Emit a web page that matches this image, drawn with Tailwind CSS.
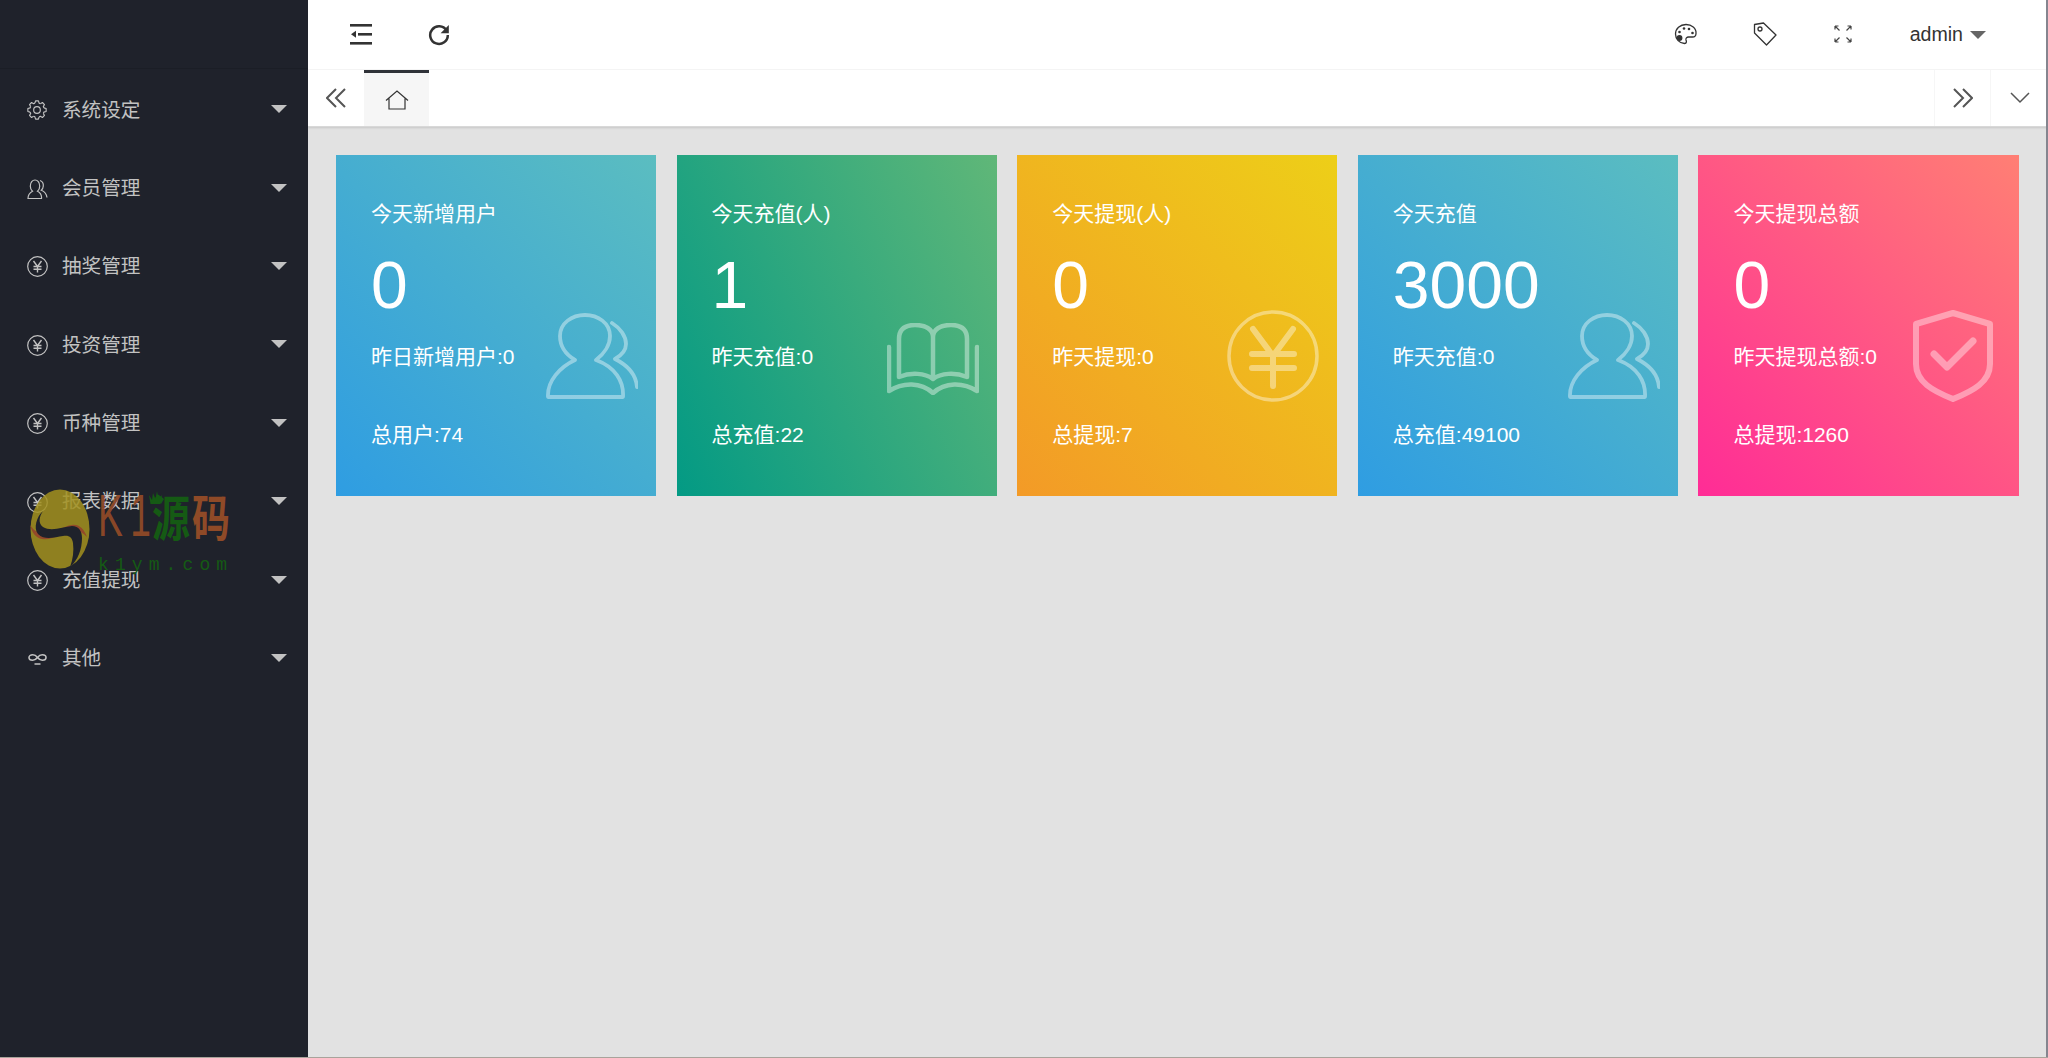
<!DOCTYPE html>
<html lang="zh"><head><meta charset="utf-8"><script src="https://cdn.jsdelivr.net/npm/@tailwindcss/browser@4"></script></head>
<body class="h-[1058px] w-[2048px] overflow-hidden font-['Liberation_Sans','Noto_Sans_CJK_SC',sans-serif]">
<div class="relative flex h-[1058px] w-[2048px] bg-[#e2e2e2]">
<aside class="relative w-[308px] shrink-0 bg-[#1f222b] text-[#c2c2c2]">
  <div class="h-[69px] border-b border-[#1b1e26]"></div>
  <nav class="pt-[2px] text-[19.6px]">
    <div class="flex h-[78.4px] items-center pl-[27px] pr-[21px]"><svg class="h-[20px] w-[20px]" viewBox="-10.500 -10.500 21 21" fill="none" stroke="currentColor" stroke-width="1.200" stroke-linejoin="round"><path d="M-2.200-7.200L-1.500-9.600L1.500-9.600L2.200-7.200A7.500 7.500 0 0 1 3.530-6.650"/><path transform="rotate(45)" d="M-2.200-7.200L-1.500-9.600L1.500-9.600L2.200-7.200A7.500 7.500 0 0 1 3.530-6.650"/><path transform="rotate(90)" d="M-2.200-7.200L-1.500-9.600L1.500-9.600L2.200-7.200A7.500 7.500 0 0 1 3.530-6.650"/><path transform="rotate(135)" d="M-2.200-7.200L-1.500-9.600L1.500-9.600L2.200-7.200A7.500 7.500 0 0 1 3.530-6.650"/><path transform="rotate(180)" d="M-2.200-7.200L-1.500-9.600L1.500-9.600L2.200-7.200A7.500 7.500 0 0 1 3.530-6.650"/><path transform="rotate(225)" d="M-2.200-7.200L-1.500-9.600L1.500-9.600L2.200-7.200A7.500 7.500 0 0 1 3.530-6.650"/><path transform="rotate(270)" d="M-2.200-7.200L-1.500-9.600L1.500-9.600L2.200-7.200A7.500 7.500 0 0 1 3.530-6.650"/><path transform="rotate(315)" d="M-2.200-7.200L-1.500-9.600L1.500-9.600L2.200-7.200A7.500 7.500 0 0 1 3.530-6.650"/><circle r="3.500"/></svg><span class="ml-[15px] flex-1">系统设定</span><i class="mb-[2px] h-0 w-0 border-x-[8.5px] border-t-[8px] border-x-transparent border-t-[#c2c2c2]"></i></div>
    <div class="flex h-[78.4px] items-center pl-[27px] pr-[21px]"><svg class="h-[20px] w-[21px]" viewBox="0 0 21 20" fill="none" stroke="currentColor" stroke-width="1.200"><path d="M1 19.500h13.500c.4-3.500-1.500-6-4-7.300 1.500-1.200 2.200-3 2.200-5C12.700 3.500 10.500 1 8 1S3.300 3.500 3.300 7.200c0 2 .8 3.800 2.200 5-2.500 1.300-4.500 3.800-4.500 7.300z"/><path d="M13 1.500c2.300.8 3.500 3 3.300 5.500-.1 1.700-.8 3.200-2 4.300 3 1.200 5.200 3.800 5.700 7.200"/></svg><span class="ml-[14px] flex-1">会员管理</span><i class="mb-[2px] h-0 w-0 border-x-[8.5px] border-t-[8px] border-x-transparent border-t-[#c2c2c2]"></i></div>
    <div class="flex h-[78.4px] items-center pl-[27px] pr-[21px]"><svg class="h-[21px] w-[21px]" viewBox="0 0 21 21" fill="none" stroke="currentColor" stroke-width="1.200"><circle cx="10.500" cy="10.500" r="9.800"/><path d="M6.500 5l4 5.500 4-5.500M10.500 10.500V16.500M6.500 10.500h8M6.500 13.300h8" stroke-width="1.400"/></svg><span class="ml-[14px] flex-1">抽奖管理</span><i class="mb-[2px] h-0 w-0 border-x-[8.5px] border-t-[8px] border-x-transparent border-t-[#c2c2c2]"></i></div>
    <div class="flex h-[78.4px] items-center pl-[27px] pr-[21px]"><svg class="h-[21px] w-[21px]" viewBox="0 0 21 21" fill="none" stroke="currentColor" stroke-width="1.200"><circle cx="10.500" cy="10.500" r="9.800"/><path d="M6.500 5l4 5.500 4-5.500M10.500 10.500V16.500M6.500 10.500h8M6.500 13.300h8" stroke-width="1.400"/></svg><span class="ml-[14px] flex-1">投资管理</span><i class="mb-[2px] h-0 w-0 border-x-[8.5px] border-t-[8px] border-x-transparent border-t-[#c2c2c2]"></i></div>
    <div class="flex h-[78.4px] items-center pl-[27px] pr-[21px]"><svg class="h-[21px] w-[21px]" viewBox="0 0 21 21" fill="none" stroke="currentColor" stroke-width="1.200"><circle cx="10.500" cy="10.500" r="9.800"/><path d="M6.500 5l4 5.500 4-5.500M10.500 10.500V16.500M6.500 10.500h8M6.500 13.300h8" stroke-width="1.400"/></svg><span class="ml-[14px] flex-1">币种管理</span><i class="mb-[2px] h-0 w-0 border-x-[8.5px] border-t-[8px] border-x-transparent border-t-[#c2c2c2]"></i></div>
    <div class="flex h-[78.4px] items-center pl-[27px] pr-[21px]"><svg class="h-[21px] w-[21px]" viewBox="0 0 21 21" fill="none" stroke="currentColor" stroke-width="1.200"><circle cx="10.500" cy="10.500" r="9.800"/><path d="M6.500 5l4 5.500 4-5.500M10.500 10.500V16.500M6.500 10.500h8M6.500 13.300h8" stroke-width="1.400"/></svg><span class="ml-[14px] flex-1">报表数据</span><i class="mb-[2px] h-0 w-0 border-x-[8.5px] border-t-[8px] border-x-transparent border-t-[#c2c2c2]"></i></div>
    <div class="flex h-[78.4px] items-center pl-[27px] pr-[21px]"><svg class="h-[21px] w-[21px]" viewBox="0 0 21 21" fill="none" stroke="currentColor" stroke-width="1.200"><circle cx="10.500" cy="10.500" r="9.800"/><path d="M6.500 5l4 5.500 4-5.500M10.500 10.500V16.500M6.500 10.500h8M6.500 13.300h8" stroke-width="1.400"/></svg><span class="ml-[14px] flex-1">充值提现</span><i class="mb-[2px] h-0 w-0 border-x-[8.5px] border-t-[8px] border-x-transparent border-t-[#c2c2c2]"></i></div>
    <div class="flex h-[78.4px] items-center pl-[27px] pr-[21px]"><svg class="h-[21px] w-[21px]" viewBox="0 0 21 21" fill="none" stroke="currentColor" stroke-width="1.600"><path d="M10.500 9.500c-1.500-2-3-2.700-4.800-2.700C3.500 6.800 2 8 2 9.500s1.500 2.700 3.700 2.700c2 0 3.300-.7 4.800-2.700 1.500-2 2.800-2.700 4.800-2.700 2.200 0 3.700 1.200 3.700 2.700s-1.500 2.700-3.700 2.700c-1.800 0-3.300-.7-4.800-2.700zM7.500 16h6" /></svg><span class="ml-[14px] flex-1">其他</span><i class="mb-[2px] h-0 w-0 border-x-[8.5px] border-t-[8px] border-x-transparent border-t-[#c2c2c2]"></i></div>
  </nav>
  <svg class="absolute left-[30px] top-[489px] h-[80px] w-[60px] opacity-85" viewBox="0 0 60 80"><ellipse cx="30" cy="40" rx="29.500" ry="39.500" fill="#a3911f"/><path d="M0 36c4 6 8 8 13 8 10 1 20-7 29-8 7-1 12 4 15 12-5-5-9-7-15-6-9 1-20 10-30 8-6-1-10-6-12-14z" fill="#a8502a"/><path d="M13 22c-4 6-5 12 0 16 8 5 20 0 29-1 7 0 10 5 10 12 0 11-4 22-12 29 3-8 4-16 3-24-1-6-4-8-10-7-8 1-18 5-25-2-5-6-1-18 5-23z" fill="#1f222b"/></svg>
  <div class="absolute left-[98px] top-[481px] h-[70px] origin-left scale-x-[0.62] text-[60px] leading-[70px] tracking-[12px] text-[#8f4a27] opacity-95">K1</div>
  <svg class="absolute left-[148px] top-[491px] h-[15px] w-[15px]" viewBox="0 0 15 15" fill="#155a14"><path d="M1 4l3 5 1-7 2.500 6L9 0l1.500 8L14 4l-1.500 9h-10z"/></svg>
  <div class="absolute left-[152px] top-[488px] origin-top scale-y-[1.3] text-[38px] font-bold leading-[48px] text-[#155a14]">源</div>
  <div class="absolute left-[192px] top-[488px] origin-top scale-y-[1.3] text-[38px] font-bold leading-[48px] text-[#8f4a27]">码</div>
  <div class="absolute left-[98px] top-[553px] font-['Liberation_Mono',monospace] text-[18px] leading-[24px] tracking-[6.100px] text-[#155a14]">k1ym.com</div>
</aside>
<main class="flex min-w-0 flex-1 flex-col">
  <header class="flex h-[70px] items-center justify-between border-b border-[#f6f6f6] bg-white text-[#333]">
    <div class="flex items-center gap-[56px] pl-[42px]">
      <svg class="h-[21px] w-[22px]" viewBox="0 0 22 21" fill="#333"><rect x="0" y="0" width="22" height="2.600"/><rect x="8" y="9" width="14" height="2.600"/><rect x="0" y="18" width="22" height="2.600"/><path d="M1 10.300l5-3.500v7z"/></svg>
      <svg class="h-[22px] w-[22px]" viewBox="0 0 22 22" fill="none" stroke="#333" stroke-width="2.500"><path d="M18.500 6.500A8.800 8.800 0 1 0 19.800 11"/><path d="M20.800 1v8.200h-8.200z" fill="#333" stroke="none"/></svg>
    </div>
    <div class="flex items-center pr-[62px]">
      <svg class="h-[22px] w-[24px]" viewBox="0 0 24 22" fill="none" stroke="#333" stroke-width="1.300"><path d="M12 1.500C6 1.500 1.500 5.500 1.500 11c0 5 4 9.500 9 9.500 2.500 0 2-2.300 1.500-3.500-.5-1.700.8-3 2.500-3h4c2.200 0 3.500-1.500 3.500-3.500C22.500 5 17.500 1.500 12 1.500z"/><circle cx="5.500" cy="15" r="2.300" fill="#333"/><circle cx="5.500" cy="9" r="1.300" fill="#333" stroke="none"/><circle cx="10" cy="5.500" r="1.300" fill="#333" stroke="none"/><circle cx="15" cy="6" r="1.300" fill="#333" stroke="none"/><circle cx="18.500" cy="10" r="1.300" fill="#333" stroke="none"/></svg>
      <svg class="ml-[55px] h-[24px] w-[24px]" viewBox="0 0 24 24" fill="none" stroke="#333" stroke-width="1.300"><path d="M1.500 2.500l9-1.500 12.500 12-9.500 10L1.500 11z" stroke-linejoin="round"/><circle cx="7" cy="7" r="2"/></svg>
      <svg class="ml-[57px] h-[18px] w-[18px]" viewBox="0 0 18 18" fill="none" stroke="#444" stroke-width="1.200"><path d="M1 1l4.500 4.500M1 1v3.500M1 1h3.500M17 1l-4.500 4.500M17 1v3.500M17 1h-3.500M1 17l4.500-4.500M1 17v-3.500M1 17h3.500M17 17l-4.500-4.500M17 17v-3.500M17 17h-3.500"/></svg>
      <span class="ml-[58px] text-[19.6px] text-[#333]">admin</span>
      <i class="ml-[7px] mt-[2px] h-0 w-0 border-x-[8.5px] border-t-[8px] border-x-transparent border-t-[#666]"></i>
    </div>
  </header>
  <div class="flex h-[57px] items-stretch border-b border-[#d8d8d8] bg-white shadow-[0_1px_2px_rgba(0,0,0,0.12)]">
    <div class="flex w-[56px] items-center justify-center"><svg class="h-[20px] w-[20px]" viewBox="0 0 20 20" fill="none" stroke="#555" stroke-width="2"><path d="M10 1L1 10l9 9M19 1l-9 9 9 9"/></svg></div>
    <div class="flex w-[65px] items-center justify-center border-t-[3px] border-[#2f3238] bg-[#f6f6f6]"><svg class="h-[20px] w-[24px]" viewBox="0 0 24 20" fill="none" stroke="#333" stroke-width="1.200"><path d="M1 10.500L12 1l11 9.500M4 8.500V19h16V8.500"/></svg></div>
    <div class="flex-1"></div>
    <div class="flex w-[56px] items-center justify-center border-l border-[#f6f6f6]"><svg class="h-[20px] w-[20px]" viewBox="0 0 20 20" fill="none" stroke="#555" stroke-width="2"><path d="M10 1l9 9-9 9M1 1l9 9-9 9"/></svg></div>
    <div class="flex w-[58px] items-center justify-center border-l border-[#f6f6f6]"><svg class="h-[12px] w-[20px]" viewBox="0 0 20 12" fill="none" stroke="#555" stroke-width="1.500"><path d="M1 1l9 9 9-9"/></svg></div>
  </div>
  <section class="grid grid-cols-5 gap-x-[20.500px] pl-[28px] pr-[29.500px] pt-[28px]">
    <div class="relative h-[341px] bg-[linear-gradient(45deg,#2f9de2,#5bbdc0)] pl-[35px] pt-[44px] text-white">
      <div class="text-[21px] leading-[30px]">今天新增用户</div><div class="mt-[10.700px] text-[66px] leading-[91px]">0</div><div class="mt-[12px] text-[21px] leading-[28px]">昨日新增用户:0</div><div class="mt-[50px] text-[21px] leading-[28px]">总用户:74</div>
      <svg class="absolute left-[210px] top-[158px] h-[88px] w-[92px] opacity-40" viewBox="0 0 92 88" fill="none" stroke="#fff" stroke-width="3.800" stroke-linecap="round" stroke-linejoin="round"><path d="M2 84h75c1-16-8-30-27-37 8-6 14-15 14-24C64 10 52 2 39 2S14 10 14 23c0 9 5 18 15 24C14 54 1 68 2 84z"/><path d="M66 10c8 5 14 13 14 21 0 6-4 11-11 15 12 6 21 15 22 28"/></svg>
    </div>
    <div class="relative h-[341px] bg-[linear-gradient(65deg,#039a84,#60b778)] pl-[35px] pt-[44px] text-white">
      <div class="text-[21px] leading-[30px]">今天充值(人)</div><div class="mt-[10.700px] text-[66px] leading-[91px]">1</div><div class="mt-[12px] text-[21px] leading-[28px]">昨天充值:0</div><div class="mt-[50px] text-[21px] leading-[28px]">总充值:22</div>
      <svg class="absolute left-[210px] top-[168px] h-[72px] w-[92px] opacity-40" viewBox="0 0 92 72" fill="none" stroke="#fff" stroke-width="4.500" stroke-linecap="round" stroke-linejoin="round"><path d="M2 24v44M90 24v44M2 68c14-9 32-9 44 2 12-11 30-11 44-2"/><path d="M46 14v42M12 54V16C12 6 18 2 28 2s18 4 18 12c0-8 8-12 18-12s16 4 16 14v38M12 54c12-5 26-4 34 2 8-6 22-7 34-2"/></svg>
    </div>
    <div class="relative h-[341px] bg-[linear-gradient(45deg,#f39a27,#edcf18)] pl-[35px] pt-[44px] text-white">
      <div class="text-[21px] leading-[30px]">今天提现(人)</div><div class="mt-[10.700px] text-[66px] leading-[91px]">0</div><div class="mt-[12px] text-[21px] leading-[28px]">昨天提现:0</div><div class="mt-[50px] text-[21px] leading-[28px]">总提现:7</div>
      <svg class="absolute left-[210px] top-[155px] h-[92px] w-[92px] opacity-40" viewBox="0 0 92 92" fill="none" stroke="#fff" stroke-width="3.500" stroke-linecap="round"><circle cx="46" cy="46" r="44"/><path d="M26 19l20 27 20-27M46 46v30M25 44h42M25 58h42" stroke-width="6"/></svg>
    </div>
    <div class="relative h-[341px] bg-[linear-gradient(45deg,#2f9de2,#5bbdc0)] pl-[35px] pt-[44px] text-white">
      <div class="text-[21px] leading-[30px]">今天充值</div><div class="mt-[10.700px] text-[66px] leading-[91px]">3000</div><div class="mt-[12px] text-[21px] leading-[28px]">昨天充值:0</div><div class="mt-[50px] text-[21px] leading-[28px]">总充值:49100</div>
      <svg class="absolute left-[210px] top-[158px] h-[88px] w-[92px] opacity-40" viewBox="0 0 92 88" fill="none" stroke="#fff" stroke-width="3.800" stroke-linecap="round" stroke-linejoin="round"><path d="M2 84h75c1-16-8-30-27-37 8-6 14-15 14-24C64 10 52 2 39 2S14 10 14 23c0 9 5 18 15 24C14 54 1 68 2 84z"/><path d="M66 10c8 5 14 13 14 21 0 6-4 11-11 15 12 6 21 15 22 28"/></svg>
    </div>
    <div class="relative h-[341px] bg-[linear-gradient(45deg,#ff2c96,#ff7f74)] pl-[35px] pt-[44px] text-white">
      <div class="text-[21px] leading-[30px]">今天提现总额</div><div class="mt-[10.700px] text-[66px] leading-[91px]">0</div><div class="mt-[12px] text-[21px] leading-[28px]">昨天提现总额:0</div><div class="mt-[50px] text-[21px] leading-[28px]">总提现:1260</div>
      <svg class="absolute left-[215px] top-[155px] h-[92px] w-[80px] opacity-40" viewBox="0 0 80 92" fill="none" stroke="#fff" stroke-width="6" stroke-linecap="round" stroke-linejoin="round"><path d="M3 14L40 3l37 11v40c0 18-17 27-37 35C20 81 3 72 3 54z"/><path d="M21 44l13 13 26-26" stroke-width="7"/></svg>
    </div>
  </section>
</main>
<div class="absolute right-0 top-0 h-full w-[2px] bg-[#85858f]"></div>
<div class="absolute bottom-0 left-0 h-[1px] w-full bg-[#a8a39b]"></div>
</div>
</body></html>
